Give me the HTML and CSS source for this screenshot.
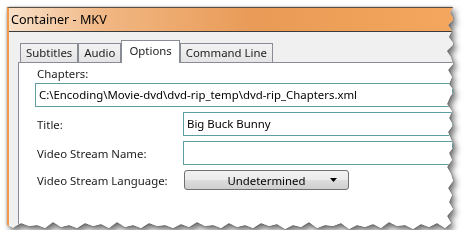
FILE: index.html
```html
<!DOCTYPE html>
<html lang="en">
<head>
    <meta charset="UTF-8">
    <title>Container - MKV</title>
    <link rel="stylesheet" href="styles.css">
</head>
<body>
    <div class="shot">
        <div class="window">
            <div class="titlebar">Container - MKV</div>
            <div class="body">
                <div class="tabs">
                    <div class="tab">Subtitles</div>
                    <div class="tab">Audio</div>
                    <div class="tab active">Options</div>
                    <div class="tab">Command Line</div>
                </div>
                <div class="panel">
                    <div class="label top">Chapters:</div>
                    <div class="input path">C:\Encoding\Movie-dvd\dvd-rip_temp\dvd-rip_Chapters.xml</div>
                    <div class="row">
                        <span class="label">Title:</span>
                        <div class="input">Big Buck Bunny</div>
                    </div>
                    <div class="row">
                        <span class="label">Video Stream Name:</span>
                        <div class="input"></div>
                    </div>
                    <div class="row">
                        <span class="label">Video Stream Language:</span>
                        <div class="select">
                            <span>Undetermined</span>
                            <svg class="arrow" width="7" height="4" viewBox="0 0 7 4"><path d="M0 0h7L3.5 4z" fill="#000"/></svg>
                        </div>
                    </div>
                </div>
            </div>
        </div>
    </div>
</body>
</html>
```
FILE: styles.css
```css
body{
    margin: 0;
    background: #fff;
    font-family: "Noto Sans", sans-serif;
    font-size: 11.4px;
    color: #1c1c1c;
}
.shot{
    padding: 7px 0 0 7px;
    filter: drop-shadow(0 0 1px rgba(0,0,0,0.35)) drop-shadow(3px 4px 3px rgba(0,0,0,0.55));
}
.window{
    width: 446px;
    height: 223px;
    background: #f0f0f0;
    border-top: 1px solid #5a4d42;
    border-left: 2px solid #f09a4c;
    box-sizing: border-box;
    display: flex;
    flex-direction: column;
    clip-path: polygon(0 0, 446px 0, 443px 6px, 447px 12px, 441px 18px, 445px 24px, 442px 30px, 447px 37px, 440px 44px, 444px 50px, 446px 57px, 441px 63px, 445px 70px, 442px 77px, 447px 84px, 443px 90px, 440px 97px, 445px 104px, 442px 111px, 446px 118px, 441px 125px, 444px 132px, 447px 139px, 442px 146px, 445px 153px, 440px 160px, 444px 167px, 446px 174px, 441px 181px, 445px 188px, 442px 195px, 446px 202px, 440px 209px, 444px 216px, 438px 221px, 430px 216px, 422px 220px, 414px 217px, 406px 222px, 398px 218px, 390px 219px, 382px 215px, 374px 221px, 366px 217px, 358px 220px, 350px 218px, 342px 222px, 334px 216px, 326px 219px, 318px 218px, 310px 221px, 302px 215px, 294px 220px, 286px 218px, 278px 222px, 270px 217px, 262px 219px, 254px 216px, 246px 221px, 238px 218px, 230px 220px, 222px 216px, 214px 221px, 206px 218px, 198px 219px, 190px 215px, 182px 220px, 174px 217px, 166px 221px, 158px 218px, 150px 219px, 142px 216px, 134px 221px, 126px 218px, 118px 220px, 110px 215px, 102px 221px, 94px 217px, 86px 219px, 78px 216px, 70px 221px, 62px 218px, 54px 220px, 46px 215px, 38px 221px, 30px 218px, 22px 219px, 14px 216px, 6px 221px, 0 218px);
}
.titlebar{
    height: 23px;
    line-height: 23px;
    padding-left: 2px;
    font-size: 12.6px;
    border-bottom: 1px solid #3b3b3b;
    background: linear-gradient(90deg, #f8e0c8 0%, #f1b682 22%, #e99b57 55%, #ee9f58 75%, #f4a65e 100%);
    color: #000;
}
.body{
    flex: 1;
    display: flex;
    flex-direction: column;
    padding: 9px 0 0 9px;
}
.tabs{
    display: flex;
    align-items: flex-end;
    padding-left: 2px;
    height: 21px;
    position: relative;
    z-index: 1;
}
.tab{
    height: 18px;
    line-height: 18px;
    padding: 0 5px;
    border: 1px solid #898c95;
    border-bottom: none;
    background: linear-gradient(#f3f3f3, #e4e4e4);
}
.tab.active{
    height: 22px;
    line-height: 19px;
    margin-bottom: -1px;
    background: #fff;
    padding: 0 7px;
}
.panel{
    flex: 1;
    background: #fff;
    border-top: 1px solid #898c95;
    border-left: 1px solid #898c95;
    padding: 3px 0 0 16px;
    display: flex;
    flex-direction: column;
    gap: 5px;
}
.label{
    padding-left: 2px;
    line-height: 15px;
    width: 146px;
    flex: none;
}
.label.top{
    margin-bottom: -3px;
}
.row{
    display: flex;
    align-items: center;
}
.input{
    height: 24px;
    box-sizing: border-box;
    border: 1px solid #5f9ea0;
    padding: 0 3px;
    line-height: 22px;
    white-space: nowrap;
    color: #000;
    flex: 1;
}
.input.path{
    flex: none;
}
.select{
    width: 165px;
    height: 20px;
    box-sizing: border-box;
    margin-left: 1px;
    border: 1px solid #707070;
    border-radius: 3px;
    background: linear-gradient(#f2f2f2 0%, #ebebeb 50%, #dddddd 50%, #cfcfcf 100%);
    display: flex;
    align-items: center;
    justify-content: center;
    position: relative;
    color: #000;
}
.arrow{
    position: absolute;
    right: 11px;
    top: 7px;
}
```
